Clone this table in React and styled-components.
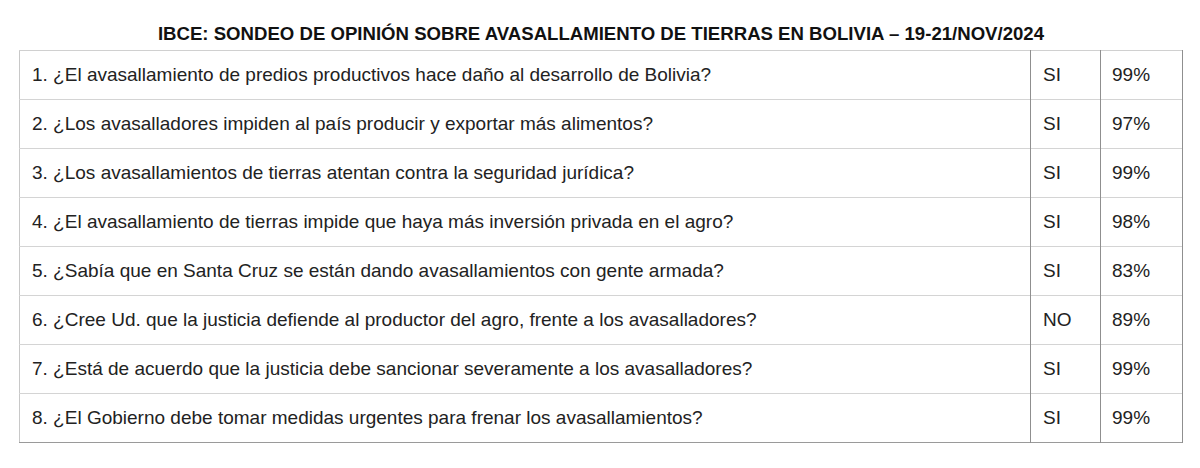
import React from "react";
import styled, { createGlobalStyle } from "styled-components";

const rows = [
  ["1. ¿El avasallamiento de predios productivos hace daño al desarrollo de Bolivia?", "SI", "99%"],
  ["2. ¿Los avasalladores impiden al país producir y exportar más alimentos?", "SI", "97%"],
  ["3. ¿Los avasallamientos de tierras atentan contra la seguridad jurídica?", "SI", "99%"],
  ["4. ¿El avasallamiento de tierras impide que haya más inversión privada en el agro?", "SI", "98%"],
  ["5. ¿Sabía que en Santa Cruz se están dando avasallamientos con gente armada?", "SI", "83%"],
  ["6. ¿Cree Ud. que la justicia defiende al productor del agro, frente a los avasalladores?", "NO", "89%"],
  ["7. ¿Está de acuerdo que la justicia debe sancionar severamente a los avasalladores?", "SI", "99%"],
  ["8. ¿El Gobierno debe tomar medidas urgentes para frenar los avasallamientos?", "SI", "99%"],
];

const App = () => {
  return (
    <>
      <GlobalStyle />
      <Page>
        <Title>IBCE: SONDEO DE OPINIÓN SOBRE AVASALLAMIENTO DE TIERRAS EN BOLIVIA – 19-21/NOV/2024</Title>
        <Table>
          <tbody>
            {rows.map(([q, a, p], i) => (
              <Row key={i} last={i === rows.length - 1}>
                <Question>{q}</Question>
                <Answer>{a}</Answer>
                <Percent>{p}</Percent>
              </Row>
            ))}
          </tbody>
        </Table>
      </Page>
    </>
  );
};

export default App;

const GlobalStyle = createGlobalStyle`
  body {
    margin: 0;
    background: #fff;
    font-family: "Liberation Sans", Arial, sans-serif;
  }
`;

const Page = styled.div`
  width: 1200px;
  height: 468px;
  padding: 22px 17px 0 19px;
  box-sizing: border-box;
`;

const Title = styled.h1`
  margin: 0 0 4px;
  text-align: center;
  font-size: 18.6px;
  line-height: 24px;
  font-weight: bold;
  color: #111;
`;

const Table = styled.table`
  width: 100%;
  border-collapse: collapse;
  border-top: 1px solid #d0d0d0;
  border-left: 1px solid #c8c8c8;
  font-size: 19px;
  color: #222;
`;

const Row = styled.tr`
  height: 49px;
  border-bottom: 1px solid ${(p) => (p.last ? "#9a9a9a" : "#d4d4d4")};
`;

const Cell = styled.td`
  padding: 0 0 0 12px;
  border-right: 1px solid #8f8f8f;
  vertical-align: middle;
`;

const Question = styled(Cell)``;

const Answer = styled(Cell)`
  width: 57px;
`;

const Percent = styled(Cell)`
  width: 70px;
  padding-left: 11px;
`;
